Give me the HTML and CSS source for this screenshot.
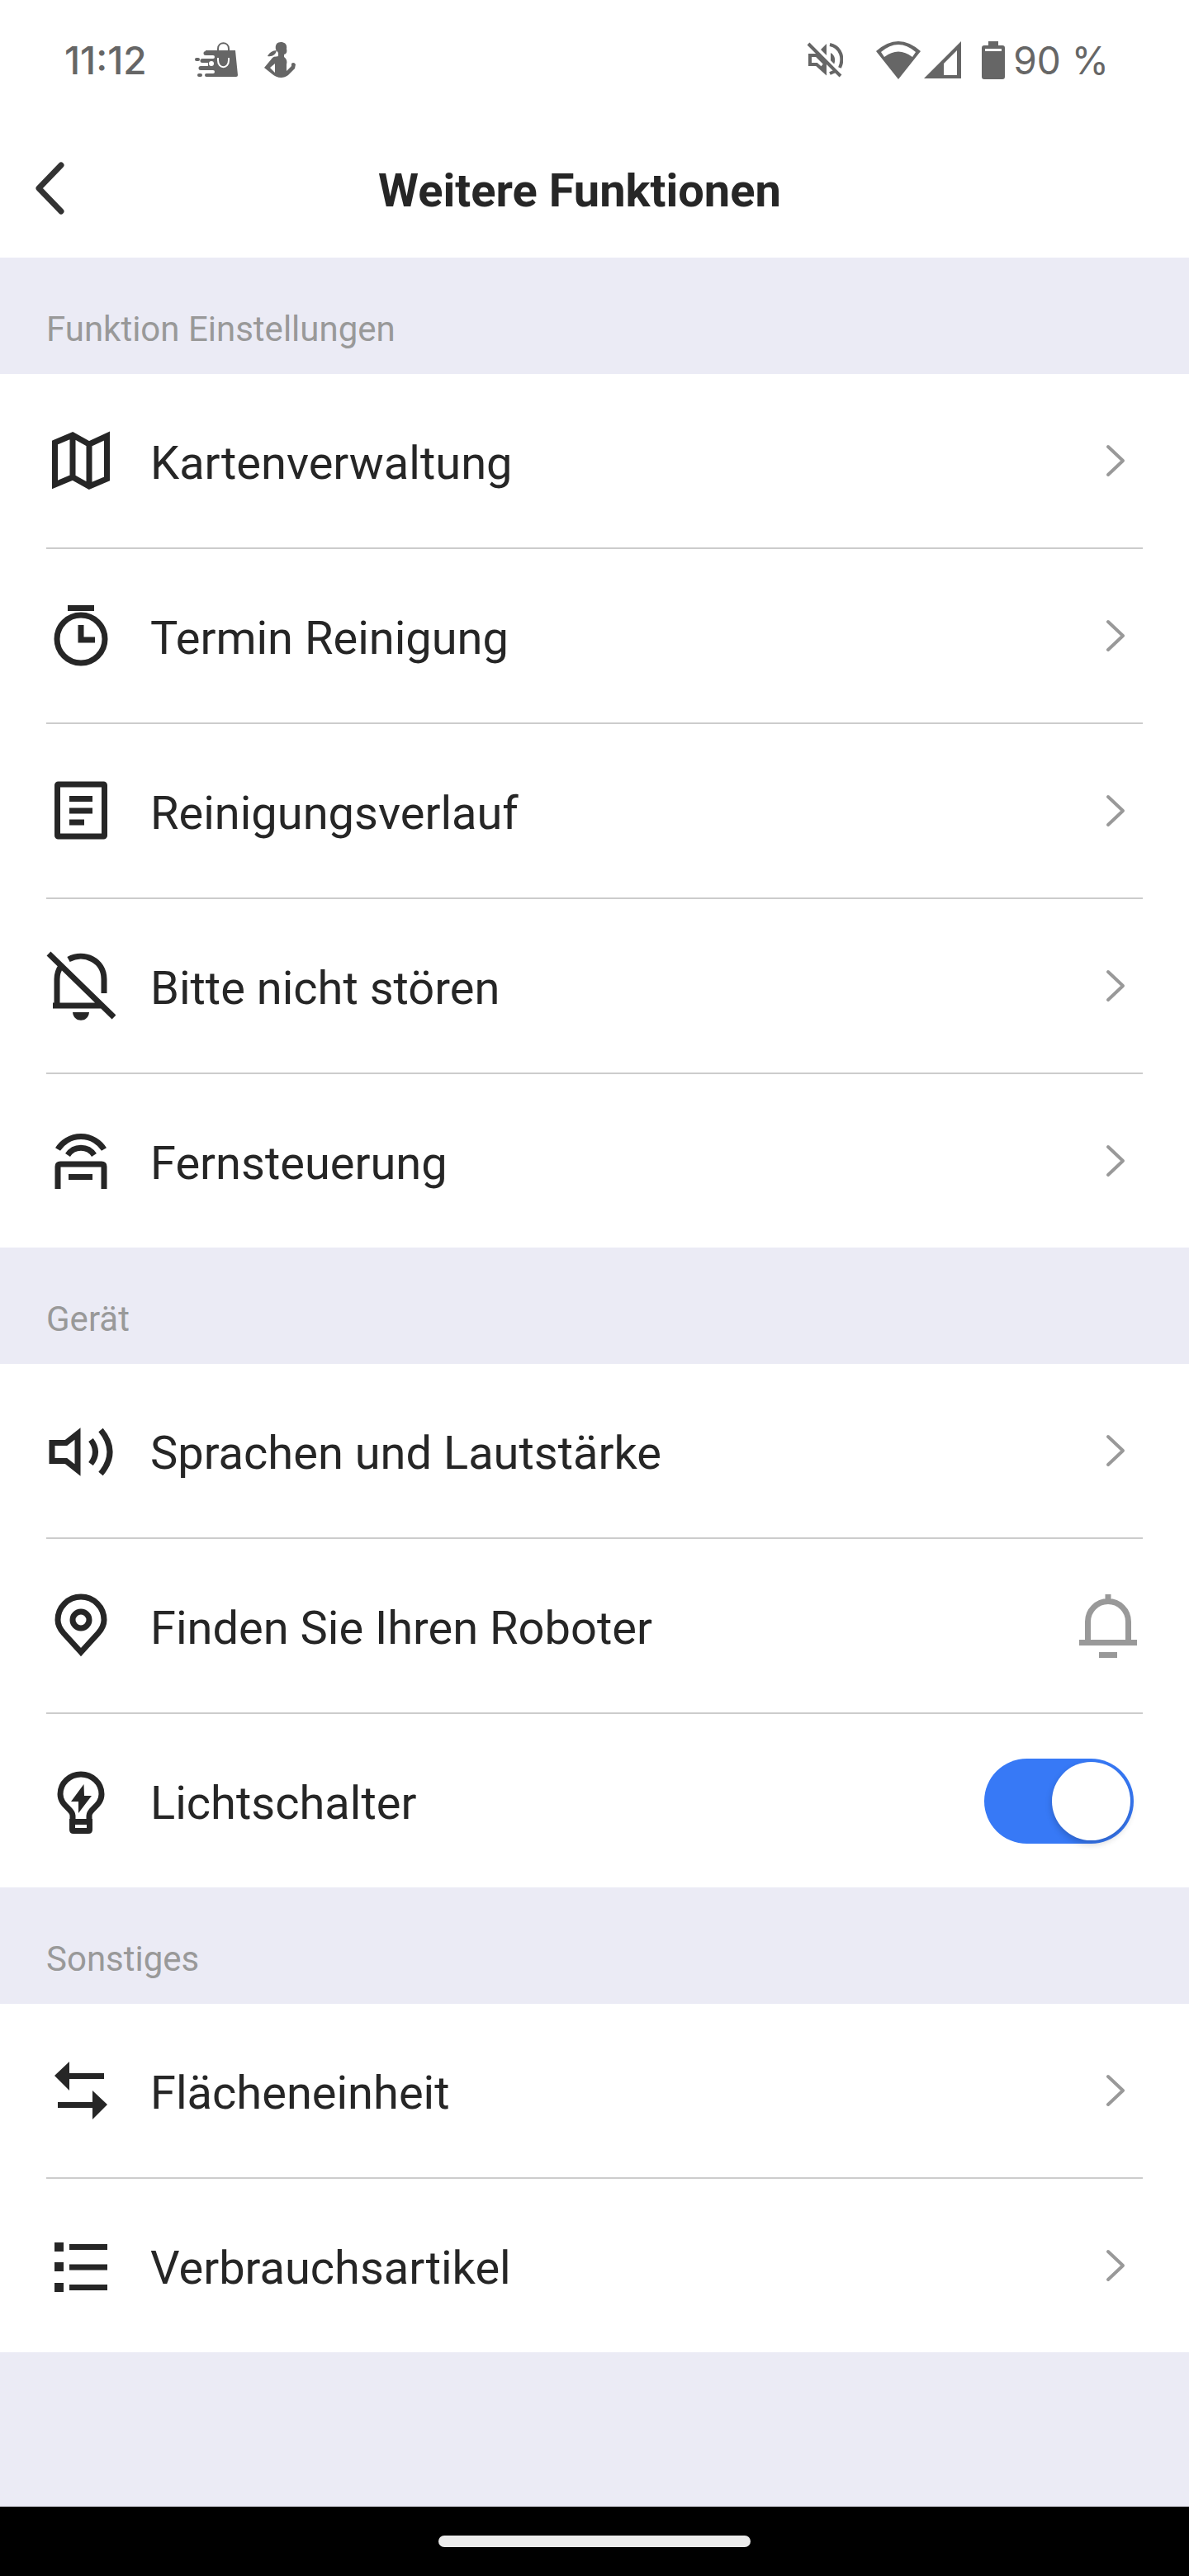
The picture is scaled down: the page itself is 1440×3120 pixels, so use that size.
FILE: index.html
```html
<!DOCTYPE html>
<html lang="de">
<head>
  <meta charset="UTF-8">
  <meta name="viewport" content="width=device-width, initial-scale=1.0">
  <title>Weitere Funktionen</title>
  <link rel="stylesheet" href="styles.css">
</head>
<body>
  <div class="statusbar">
    <span class="time">11:12</span>
    <div class="notifications">
      <svg width="52" height="44" viewBox="0 0 52 44">
        <path d="M13 10h36l3 30q0 2-2 2H14a2 2 0 0 1 0-4h8a2 2 0 0 0 0-4H7a2 2 0 0 1 0-5h9v-4H9a2 2 0 0 1 0-5h13a2 2 0 0 0 0-4h-9a2 2 0 0 1 0-5z" fill="#666"/>
        <rect y="19" width="6" height="4" rx="2" fill="#666"/>
        <rect x="3" y="38" width="6" height="4" rx="2" fill="#666"/>
        <path d="M28 11V8c0-9 13-9 13 0v3" fill="none" stroke="#666" stroke-width="2"/>
        <path d="M28 19v3c0 11 13 11 13 0v-3" fill="none" stroke="#fff" stroke-width="2"/>
        <circle cx="20" cy="26" r="3" fill="#fff"/>
      </svg>
      <svg width="40" height="44" viewBox="0 0 40 44">
        <path d="M20 0c5 0 8 3 7 8 1 4 0 6-3 7v3c3 2 4 5 3 9v8l6-6V26c2-2 4-1 5 1l-1 5-8 8c-6 5-15 3-19-1L0 31l10-12c2-2 4-1 7-2v-4l-3-4C13 4 15 0 20 0zM13 26l-6 5 6 6z" fill="#666" fill-rule="evenodd"/>
        <path d="M15 10c-1 5-5 8-11 7 2-4 6-7 11-7z" fill="#666"/>
      </svg>
    </div>
    <div class="system">
      <svg class="mute" width="44" height="44" viewBox="0 0 44 44">
        <path d="M4 16h8l10 10v10L12 27H4z" fill="none" stroke="#666" stroke-width="4"/>
        <path d="M17 9l7-7v14zM22 24v13l-6-6zM29 13c6 3 6 10 4 14l-4-4z" fill="#666"/>
        <path d="M28 3c14 3 17 17 12 28M28 38l7-3" fill="none" stroke="#666" stroke-width="4"/>
        <path d="M4 0l40 40" stroke="#fff" stroke-width="4"/>
        <path d="M2 2l39 39" stroke="#666" stroke-width="4"/>
      </svg>
      <svg width="54" height="46" viewBox="0 0 54 46">
        <path d="M0 12Q27-12 54 12L27 46zM6 13l4 6q17-13 34 0l4-6Q27-5 6 13z" fill="#666" fill-rule="evenodd"/>
      </svg>
      <svg class="signal" width="46" height="46" viewBox="0 0 46 46">
        <path d="M0 45L45 0v45zM24 27v14h16V11z" fill="#666" fill-rule="evenodd"/>
      </svg>
      <svg class="battery" width="28" height="46" viewBox="0 0 28 46">
        <path d="M8 0h12v5h5q3 0 3 3v35q0 3-3 3H3q-3 0-3-3V8q0-3 3-3h5zM4 9v3h20V9z" fill="#666" fill-rule="evenodd"/>
      </svg>
      <span class="percent">90 %</span>
    </div>
  </div>

  <header class="header">
    <button class="back" aria-label="Zurück">
      <svg viewBox="0 0 84 84"><path d="M56 14L29 42l27 28" stroke-width="7" stroke-linecap="round" stroke-linejoin="round"/></svg>
    </button>
    <h1>Weitere Funktionen</h1>
  </header>

  <main>
    <h2>Funktion Einstellungen</h2>
    <ul class="list">
      <li><a class="row" href="#karten">
        <svg class="icon" viewBox="0 0 84 84"><path d="M10.5 20L32 11l20 11 21.5-10v52L52 73 32 62l-21.5 9zM32 11v51M52 22v51"/></svg>
        <span class="label">Kartenverwaltung</span>
        <svg class="icon arrow" viewBox="0 0 84 84"><path d="M42 25l18 17-18 17"/></svg>
      </a></li>
      <li><a class="row" href="#termin">
        <svg class="icon" viewBox="0 0 84 84"><circle cx="42" cy="46" r="29"/><path d="M26 8.500h32M42 29v18h17"/></svg>
        <span class="label">Termin Reinigung</span>
        <svg class="icon arrow" viewBox="0 0 84 84"><path d="M42 25l18 17-18 17"/></svg>
      </a></li>
      <li><a class="row" href="#verlauf">
        <svg class="icon" viewBox="0 0 84 84"><rect x="13.5" y="10" width="57" height="63" rx="1"/><path d="M28 27.500h28M28 42h28M28 56h18"/></svg>
        <span class="label">Reinigungsverlauf</span>
        <svg class="icon arrow" viewBox="0 0 84 84"><path d="M42 25l18 17-18 17"/></svg>
      </a></li>
      <li><a class="row" href="#ruhe">
        <svg class="icon" viewBox="0 0 84 84">
          <path d="M3 3l79 77M27 10C46 0 70 11 70 34v17M18 18q-5 7-5 16v32M8 66h60"/>
          <path class="solid" d="M32 74h20c-1 13-19 13-20 0z"/>
        </svg>
        <span class="label">Bitte nicht stören</span>
        <svg class="icon arrow" viewBox="0 0 84 84"><path d="M42 25l18 17-18 17"/></svg>
      </a></li>
      <li><a class="row" href="#fernsteuerung">
        <svg class="icon" viewBox="0 0 84 84"><path d="M14 28a33 33 0 0 1 56 0M26 35a19 19 0 0 1 32 0M14 76V49q0-3 3-3h50q3 0 3 3v27M27 61.500h29"/></svg>
        <span class="label">Fernsteuerung</span>
        <svg class="icon arrow" viewBox="0 0 84 84"><path d="M42 25l18 17-18 17"/></svg>
      </a></li>
    </ul>

    <h2>Gerät</h2>
    <ul class="list">
      <li><a class="row" href="#sprache">
        <svg class="icon" viewBox="0 0 84 84"><path d="M7 32.500h17l14-11v44l-14-11H7z"/><path d="M54 29q11 14.500 0 29M66 17q22 26.500 0 53"/></svg>
        <span class="label">Sprachen und Lautstärke</span>
        <svg class="icon arrow" viewBox="0 0 84 84"><path d="M42 25l18 17-18 17"/></svg>
      </a></li>
      <li><button class="row">
        <svg class="icon" viewBox="0 0 84 84"><path d="M42 74L21 51q-7-8-7-16a28 28 0 0 1 56 0q0 8-7 16z"/><circle cx="42" cy="35" r="10"/></svg>
        <span class="label">Finden Sie Ihren Roboter</span>
        <svg class="icon bell" viewBox="0 0 84 84"><path d="M42 4v8M7 62.500h70M31 77.500h22M17.500 62V37a24.500 24.500 0 0 1 49 0v25"/></svg>
      </button></li>
      <li><label class="row">
        <svg class="icon" viewBox="0 0 84 84">
          <path d="M32 66v-6c0-8-15-12-15-26a25 24 0 0 1 50 0c0 14-15 18-15 26v6"/>
          <path class="solid" d="M45.500 22L30 43h9v14l16-21h-9zM28 64h28v13q0 5-5 5H33q-5 0-5-5zM35 71v4h14v-4z" fill-rule="evenodd"/>
        </svg>
        <span class="label">Lichtschalter</span>
        <input class="switch" type="checkbox" checked>
      </label></li>
    </ul>

    <h2>Sonstiges</h2>
    <ul class="list">
      <li><a class="row" href="#einheit">
        <svg class="icon" viewBox="0 0 84 84"><path class="solid" d="M10 24L28 7v14h42v7H28v14zM74 59L56 42v14H14v7h42v14z"/></svg>
        <span class="label">Flächeneinheit</span>
        <svg class="icon arrow" viewBox="0 0 84 84"><path d="M42 25l18 17-18 17"/></svg>
      </a></li>
      <li><a class="row" href="#verbrauch">
        <svg class="icon" viewBox="0 0 84 84"><path d="M28 19.500h46M28 44h46M28 68.500h46"/><path class="solid" d="M10 14h11v11H10zM10 38h11v11H10zM10 63h11v11H10z"/></svg>
        <span class="label">Verbrauchsartikel</span>
        <svg class="icon arrow" viewBox="0 0 84 84"><path d="M42 25l18 17-18 17"/></svg>
      </a></li>
    </ul>
  </main>

  <footer class="navbar"><div class="handle"></div></footer>
</body>
</html>
```
FILE: styles.css
```css
* {
  box-sizing: border-box;
}
body {
  margin: 0;
  min-height: 100vh;
  display: flex;
  flex-direction: column;
  background: #ebebf5;
  color: #262626;
  font-family: Roboto, sans-serif;
}
svg {
  display: block;
  flex: none;
}

/* Statusleiste */
.statusbar {
  display: flex;
  align-items: center;
  height: 144px;
  padding: 2px 97px 0 78px;
  background: #fff;
  color: #666;
  font-family: Inter, sans-serif;
  font-size: 46px;
  font-weight: 500;
}
.time {
  width: 158px;
}
.notifications {
  display: flex;
  gap: 32px;
}
.system {
  display: flex;
  align-items: center;
  margin-left: auto;
}
.mute {
  margin-right: 40px;
}
.signal {
  margin-left: 4px;
}
.battery {
  margin: 0 10px 0 24px;
}
.percent {
  font-weight: 400;
}

/* Kopfzeile */
.header {
  display: grid;
  grid-template-columns: 84px 1fr 84px;
  align-items: center;
  height: 168px;
  padding: 0 54px 0 18px;
  background: #fff;
}
.header h1 {
  margin: 0;
  padding-top: 6px;
  text-align: center;
  font-size: 56px;
  font-weight: 700;
  line-height: 66px;
}
.back {
  width: 84px;
  height: 84px;
  padding: 0;
  border: none;
  background: none;
}
.back path {
  fill: none;
  stroke: #333;
}

/* Listen */
main {
  flex: 1;
}
h2 {
  margin: 0;
  padding: 62px 56px 29px;
  color: #999;
  font-size: 42px;
  font-weight: 400;
  line-height: 50px;
}
.list {
  margin: 0;
  padding: 0 56px;
  background: #fff;
  list-style: none;
}
.list li + li {
  border-top: 2px solid #ccc;
}
.row {
  display: flex;
  align-items: center;
  width: 100%;
  height: 210px;
  padding: 0;
  border: none;
  background: none;
  color: inherit;
  font: inherit;
  font-size: 56px;
  line-height: 66px;
  text-align: left;
  text-decoration: none;
  cursor: pointer;
}
.label {
  flex: 1;
  padding: 6px 0 0 42px;
}
.icon {
  width: 84px;
  height: 84px;
  fill: none;
  stroke: #262626;
  stroke-width: 7;
}
.icon .solid {
  fill: #262626;
  stroke: none;
}
.icon.arrow {
  stroke: #999;
  stroke-width: 4;
  stroke-linecap: round;
  stroke-linejoin: round;
}
.icon.bell {
  stroke: #999;
}
.switch {
  appearance: none;
  width: 181px;
  height: 103px;
  margin: 0 11px 0 0;
  padding: 4px;
  border-radius: 52px;
  background: #ccc;
  cursor: pointer;
}
.switch::before {
  content: "";
  display: block;
  width: 95px;
  height: 95px;
  border-radius: 50%;
  background: #fff;
  box-shadow: 0 4px 8px rgba(0, 0, 0, 0.2);
}
.switch:checked {
  background: #3779f6;
}
.switch:checked::before {
  margin-left: auto;
}

/* Navigationsleiste */
.navbar {
  display: flex;
  align-items: center;
  justify-content: center;
  height: 84px;
  background: #000;
}
.handle {
  width: 378px;
  height: 14px;
  border-radius: 7px;
  background: #ebebeb;
}
```
